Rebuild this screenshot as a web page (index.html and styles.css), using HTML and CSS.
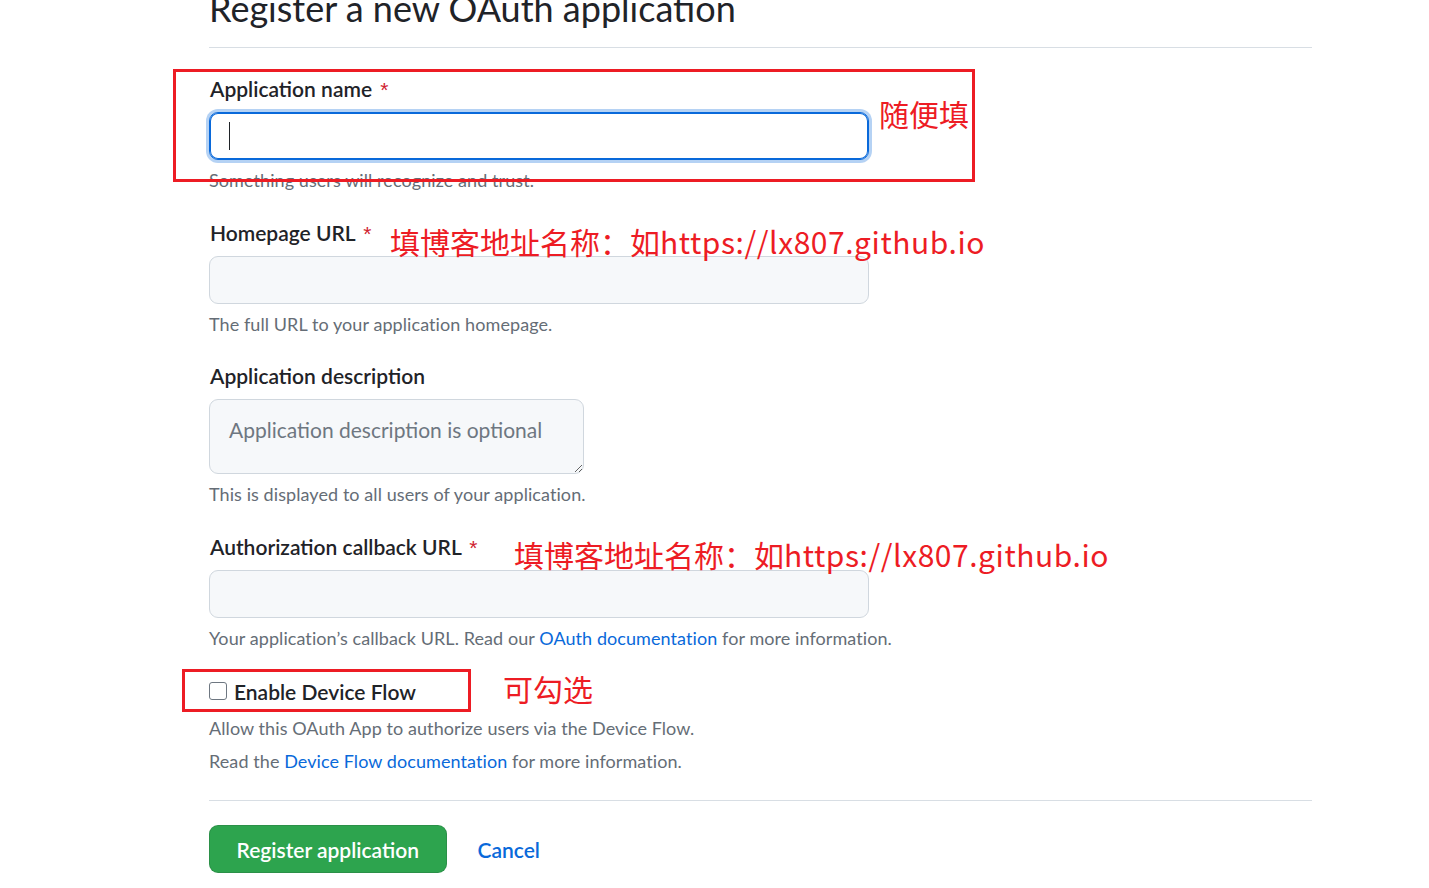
FILE: index.html
```html
<!DOCTYPE html>
<html lang="en">
<head>
<meta charset="utf-8">
<title>Register a new OAuth application</title>
<link rel="stylesheet" href="styles.css">
</head>
<body>
<main class="page">
  <div class="subhead">
    <h1 class="subhead-heading">Register a new OAuth application</h1>
  </div>
  <form class="form">
    <div class="form-group">
      <label class="form-label">Application name <span class="req">*</span></label>
      <div class="form-control is-focused" role="textbox"><span class="caret"></span></div>
      <p class="note">Something users will recognize and trust.</p>
    </div>
    <div class="form-group">
      <label class="form-label">Homepage URL <span class="req">*</span></label>
      <input class="form-control" type="text">
      <p class="note">The full URL to your application homepage.</p>
    </div>
    <div class="form-group">
      <label class="form-label">Application description</label>
      <textarea class="form-control textarea" placeholder="Application description is optional"></textarea>
      <p class="note">This is displayed to all users of your application.</p>
    </div>
    <div class="form-group">
      <label class="form-label">Authorization callback URL <span class="req">*</span></label>
      <input class="form-control" type="text">
      <p class="note">Your application’s callback URL. Read our <a class="link" href="#">OAuth documentation</a> for more information.</p>
    </div>
    <div class="form-check">
      <label class="check-label"><input class="checkbox" type="checkbox">Enable Device Flow</label>
      <p class="note note-check">Allow this OAuth App to authorize users via the Device Flow.</p>
      <p class="note note-check">Read the <a class="link" href="#">Device Flow documentation</a> for more information.</p>
    </div>
    <div class="form-actions">
      <button class="btn-primary" type="button">Register application</button>
      <a class="btn-invisible" href="#">Cancel</a>
    </div>
  </form>
</main>

<div class="redbox redbox-name"></div>
<div class="redbox redbox-device"></div>
<div class="anno anno-name">随便填</div>
<div class="anno anno-home">填博客地址名称：如<span class="anno-latin">https://lx807.github.io</span></div>
<div class="anno anno-callback">填博客地址名称：如<span class="anno-latin">https://lx807.github.io</span></div>
<div class="anno anno-device">可勾选</div>
</body>
</html>
```

FILE: styles.css
```css
html, body {
  margin: 0;
  padding: 0;
  background: #ffffff;
}

body {
  position: relative;
  min-height: 888px;
  overflow: hidden;
  font-family: Lato, "Noto Sans", "Liberation Sans", sans-serif;
  color: #1f2328;
}

.page {
  width: 1103px;
  padding-left: 209px;
}

.subhead {
  margin-top: -10px;
  padding-bottom: 21px;
  border-bottom: 1px solid #d8dee4;
}

.subhead-heading {
  margin: 0;
  font-size: 36px;
  line-height: 36px;
  font-weight: 400;
  color: #1f2328;
}

.form {
  padding-top: 26px;
}

.form-group {
  margin-bottom: 25.5px;
}

.form-label {
  display: block;
  height: 30px;
  font-family: "Lato Semibold", Lato, "Noto Sans", sans-serif;
  font-size: 21px;
  line-height: 30px;
  font-weight: 600;
  padding-left: 1px;
}

.req {
  color: #cf222e;
  font-family: "Liberation Sans", sans-serif;
  font-weight: 400;
  line-height: 1;
  margin-left: 3px;
}

.form-control {
  display: block;
  box-sizing: border-box;
  width: 660px;
  height: 48px;
  margin: 8px 0 0;
  padding: 0 19px;
  border: 1px solid #d0d7de;
  border-radius: 9px;
  background: #f6f8fa;
  font-family: inherit;
  font-size: 21px;
  color: #1f2328;
  outline: none;
}

.is-focused {
  display: flex;
  align-items: center;
  background: #ffffff;
  border-color: #0969da;
  box-shadow: inset 0 0 0 1px #0969da, 0 0 0 3px rgba(9, 105, 218, 0.3);
}

.caret {
  width: 1px;
  height: 28px;
  background: #1f2328;
}

.textarea {
  width: 375px;
  height: 75px;
  padding: 14px 19px;
  line-height: 31px;
  resize: vertical;
}

.textarea::placeholder {
  color: #6e7781;
  opacity: 1;
}

.note {
  margin: 8px 0 0;
  font-size: 18px;
  line-height: 24px;
  color: #656d76;
  letter-spacing: 0.08px;
}

.link {
  color: #0969da;
  text-decoration: none;
}

.form-check {
  padding-top: 2px;
}

.check-label {
  display: flex;
  align-items: center;
  gap: 7px;
  height: 30px;
  font-family: "Lato Semibold", Lato, "Noto Sans", sans-serif;
  font-size: 21px;
  line-height: 30px;
  font-weight: 600;
}

.checkbox {
  appearance: none;
  -webkit-appearance: none;
  box-sizing: border-box;
  flex: none;
  width: 18px;
  height: 18px;
  margin: -3px 0 0;
  border: 1px solid #6e7781;
  border-radius: 3px;
  background: #ffffff;
}

.note-check {
  margin-top: 9px;
}

.form-actions {
  display: flex;
  align-items: center;
  gap: 31px;
  margin-top: 27px;
  padding-top: 24px;
  border-top: 1px solid #d8dee4;
}

.btn-primary {
  box-sizing: border-box;
  height: 48px;
  padding: 0 26.5px;
  border: 1px solid rgba(31, 35, 40, 0.15);
  border-radius: 9px;
  background: #2da44e;
  color: #ffffff;
  font-family: "Lato Semibold", Lato, "Noto Sans", sans-serif;
  font-size: 21px;
  font-weight: 600;
}

.btn-invisible {
  color: #0969da;
  font-family: "Lato Semibold", Lato, "Noto Sans", sans-serif;
  font-size: 21px;
  font-weight: 600;
  text-decoration: none;
}

.redbox {
  position: absolute;
  box-sizing: border-box;
  border: 3px solid #ed1c24;
}

.redbox-name {
  left: 173px;
  top: 69px;
  width: 802px;
  height: 113px;
}

.redbox-device {
  left: 182px;
  top: 669px;
  width: 289px;
  height: 43px;
}

.anno {
  position: absolute;
  color: #ed1c24;
  font-family: "Noto Sans CJK SC", "Noto Sans", sans-serif;
  font-size: 30px;
  line-height: 30px;
  white-space: nowrap;
}

.anno-latin {
  letter-spacing: 0.55px;
}

.anno-name {
  left: 879px;
  top: 98px;
}

.anno-home {
  left: 390px;
  top: 226px;
}

.anno-callback {
  left: 514px;
  top: 539px;
}

.anno-device {
  left: 503px;
  top: 673px;
}
```
